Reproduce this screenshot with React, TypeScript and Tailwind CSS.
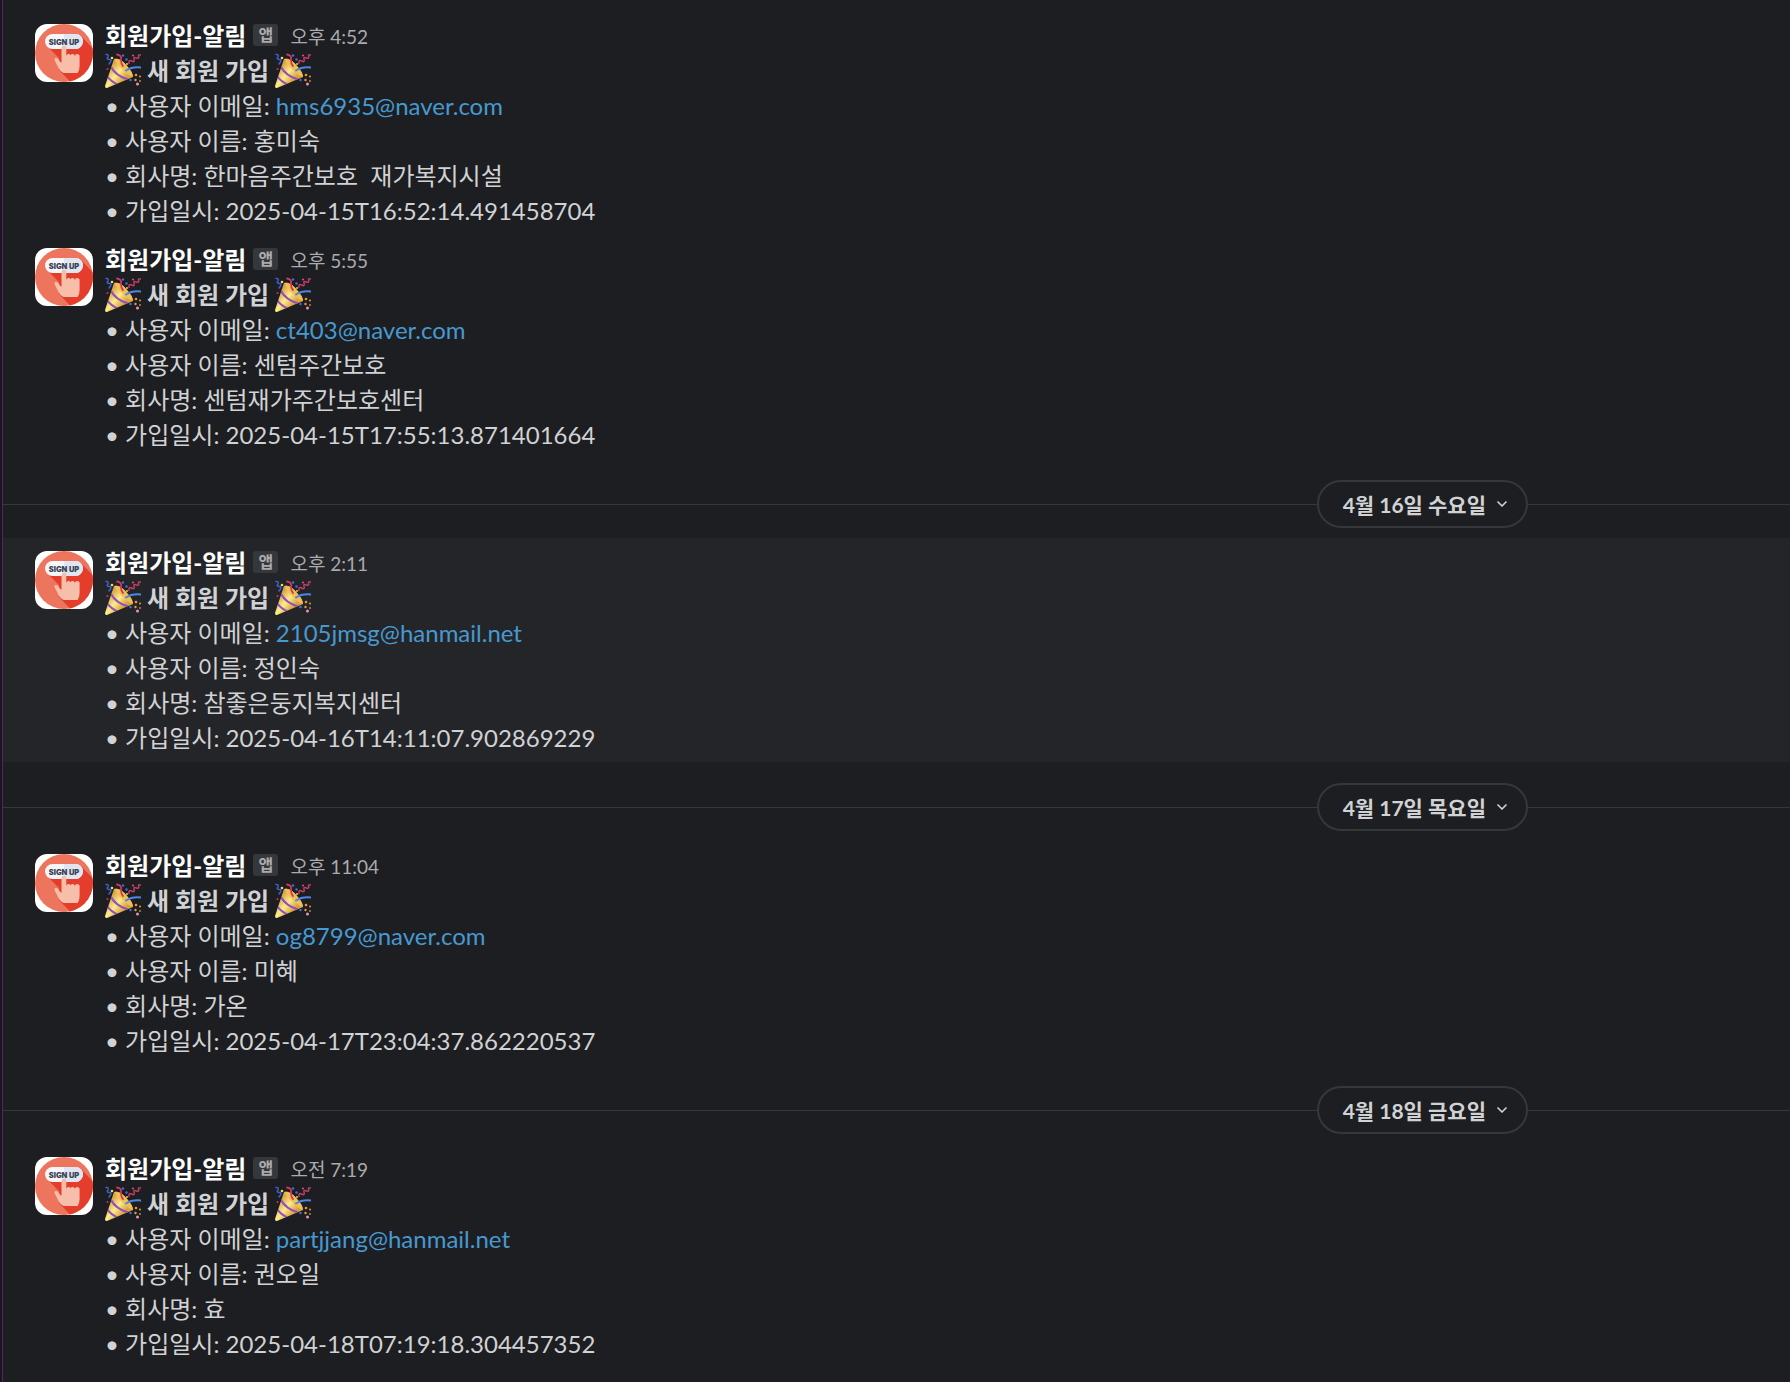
import { ChevronDown } from 'lucide-react';

interface SignupMessage {
  id: string;
  time: string;
  email: string;
  userName: string;
  company: string;
  joinedAt: string;
  highlighted?: boolean;
}

interface DayGroup {
  label?: string;
  messages: SignupMessage[];
}

const days: DayGroup[] = [
  {
    messages: [
      {
        id: 'm1',
        time: '오후 4:52',
        email: 'hms6935@naver.com',
        userName: '홍미숙',
        company: '한마음주간보호  재가복지시설',
        joinedAt: '2025-04-15T16:52:14.491458704',
      },
      {
        id: 'm2',
        time: '오후 5:55',
        email: 'ct403@naver.com',
        userName: '센텀주간보호',
        company: '센텀재가주간보호센터',
        joinedAt: '2025-04-15T17:55:13.871401664',
      },
    ],
  },
  {
    label: '4월 16일 수요일',
    messages: [
      {
        id: 'm3',
        time: '오후 2:11',
        email: '2105jmsg@hanmail.net',
        userName: '정인숙',
        company: '참좋은둥지복지센터',
        joinedAt: '2025-04-16T14:11:07.902869229',
        highlighted: true,
      },
    ],
  },
  {
    label: '4월 17일 목요일',
    messages: [
      {
        id: 'm4',
        time: '오후 11:04',
        email: 'og8799@naver.com',
        userName: '미혜',
        company: '가온',
        joinedAt: '2025-04-17T23:04:37.862220537',
      },
    ],
  },
  {
    label: '4월 18일 금요일',
    messages: [
      {
        id: 'm5',
        time: '오전 7:19',
        email: 'partjjang@hanmail.net',
        userName: '권오일',
        company: '효',
        joinedAt: '2025-04-18T07:19:18.304457352',
      },
    ],
  },
];

export default function App() {
  return (
    <div className="min-h-screen bg-[#1f1226] pl-[2px] font-['Lato','Noto_Sans_CJK_KR',sans-serif]">
      <main className="min-h-screen border-l border-[#4b2d53] bg-[#1d1e22] pt-[11px] text-[24px] leading-[35px] text-[#d1d2d3]">
        {days.map((day, i) => (
          <section key={day.label ?? i}>
            {day.label && <DayDivider label={day.label} />}
            {day.messages.map((message) => (
              <Message key={message.id} message={message} />
            ))}
          </section>
        ))}
      </main>
    </div>
  );
}

function DayDivider({ label }: { label: string }) {
  return (
    <div className="flex items-center pt-[21px] pb-[10px]">
      <div className="h-px flex-1 bg-[#36373b]" />
      <button
        type="button"
        className="flex h-12 items-center gap-2 rounded-full border-2 border-[#36373b] pr-4 pl-6 text-[21px] font-bold"
      >
        {label}
        <ChevronDown className="h-4 w-4" strokeWidth={2.5} />
      </button>
      <div className="h-px w-[262px] bg-[#36373b]" />
    </div>
  );
}

function Message({ message }: { message: SignupMessage }) {
  return (
    <article className={`flex gap-3 px-8 py-[7px] ${message.highlighted ? 'bg-[#242529]' : ''}`}>
      <SignUpAvatar />
      <div className="min-w-0 flex-1">
        <header className="flex h-[35px] items-center">
          <span className="font-bold text-white">회원가입-알림</span>
          <span className="mb-[2px] ml-[7px] flex h-[22px] w-[25px] items-center justify-center rounded-[3px] bg-[#36373b] text-[16px] font-bold text-[#ababad]">
            앱
          </span>
          <time className="mt-[2px] ml-3 text-[19px] text-[#ababad]">{message.time}</time>
        </header>
        <p className="flex h-[35px] items-center gap-[6px] font-bold">
          <PartyPopper />
          새 회원 가입
          <PartyPopper />
        </p>
        <p>
          • 사용자 이메일:{' '}
          <a href={`mailto:${message.email}`} className="text-[#4799cf]">
            {message.email}
          </a>
        </p>
        <p>• 사용자 이름: {message.userName}</p>
        <p className="whitespace-pre-wrap">• 회사명: {message.company}</p>
        <p>• 가입일시: {message.joinedAt}</p>
      </div>
    </article>
  );
}

function SignUpAvatar() {
  return (
    <svg viewBox="0 0 58 58" className="mt-[6px] h-[58px] w-[58px] shrink-0 rounded-xl bg-white">
      <circle cx="29" cy="29" r="29" fill="#ee755d" />
      <path d="M13 23 L46 12 L57.500 24 A29 29 0 0 1 35 57.400 L24 46 L24 34Z" fill="#e43d2b" />
      <rect x="10" y="10" width="38" height="15" rx="7.500" fill="#f4f6fa" />
      <path d="M29 10 H40.500 a7.500 7.500 0 0 1 0 15 H29Z" fill="#dfe6f1" />
      <path
        d="M26.500 24 a2.400 2.400 0 0 1 4.800 0 V32 a2.300 2.300 0 0 1 4.300 -.8 a2.300 2.300 0 0 1 4.300 .8 a2.300 2.300 0 0 1 4.700 1 V42 q0 4 -2 7 H28.500 q-3 -1 -5 -5 l-4 -8 q-.5 -2.500 2 -2 q2 .5 3 3 l2 2Z"
        fill="#f7bfaa"
      />
      <text
        x="29"
        y="20.500"
        textAnchor="middle"
        fontSize="7.500"
        fontWeight="900"
        fontFamily="Inter, sans-serif"
        fill="#3b4256"
      >
        SIGN UP
      </text>
    </svg>
  );
}

function PartyPopper() {
  return (
    <svg viewBox="0 0 36 36" className="h-9 w-9 shrink-0" fill="none" role="img" aria-label="tada">
      <defs>
        <linearGradient id="cone" x1="4" y1="16" x2="18" y2="28" gradientUnits="userSpaceOnUse">
          <stop offset="0" stopColor="#dba545" />
          <stop offset="0.5" stopColor="#fdec8c" />
          <stop offset="1" stopColor="#dba13c" />
        </linearGradient>
        <clipPath id="coneClip">
          <path d="M9 6 Q14 4 21 12 Q28 20 28 24 L2 35 Q0 35.500 0 33Z" />
        </clipPath>
      </defs>
      <g clipPath="url(#coneClip)">
        <rect width="36" height="36" fill="url(#cone)" />
        <path d="M6 14 Q11 23 23 26.500" stroke="#8f4fc4" strokeWidth="2.200" />
        <path d="M2 23 Q6 29 14 32" stroke="#8f4fc4" strokeWidth="2.200" />
      </g>
      <path d="M10 6 Q16 5 22 13 Q28 19 28 24 Q22 22 16 15 Q10 9 10 6Z" fill="#eec056" />
      <path d="M12 1.500 Q17 2 16 7 Q16 11 18 13" stroke="#d7365c" strokeWidth="1.800" strokeLinecap="round" />
      <path d="M21 17.500 Q27 13.500 36 14.500" stroke="#4b86e8" strokeWidth="2" strokeLinecap="round" />
      <path
        d="M1 1.500 Q4 1 3 4 Q1 6 4 6.500 Q7 6 5.500 9 L4 11"
        stroke="#3c62cf"
        strokeWidth="1.500"
        strokeLinecap="round"
      />
      <path
        d="M24 10.500 Q23.500 6.500 26.500 8 Q30 10 29 6 Q28.500 3.500 31.500 5 Q34.500 6 33.500 3 Q33 1.500 36 2"
        stroke="#c03f63"
        strokeWidth="1.500"
        strokeLinecap="round"
      />
      <circle cx="7" cy="5" r="1.300" fill="#f0dc4a" />
      <circle cx="2.500" cy="16" r="1" fill="#c03f63" />
      <circle cx="18" cy="2.500" r="1.200" fill="#3f6fe0" />
      <circle cx="21.500" cy="6.500" r="1.200" fill="#3f6fe0" />
      <circle cx="28" cy="2.500" r="1.100" fill="#e0447c" />
      <circle cx="22" cy="11" r="1.100" fill="#efb63d" />
      <circle cx="31" cy="22" r="1.300" fill="#e79a3c" />
      <circle cx="35" cy="23.500" r="1" fill="#e79a3c" />
      <circle cx="25.500" cy="27" r="1.200" fill="#3f6fe0" />
      <circle cx="30.500" cy="27" r="1.200" fill="#e79a3c" />
      <circle cx="35" cy="28" r="1" fill="#b9853a" />
      <circle cx="32.500" cy="31" r="1.500" fill="#ee8fbd" />
    </svg>
  );
}
